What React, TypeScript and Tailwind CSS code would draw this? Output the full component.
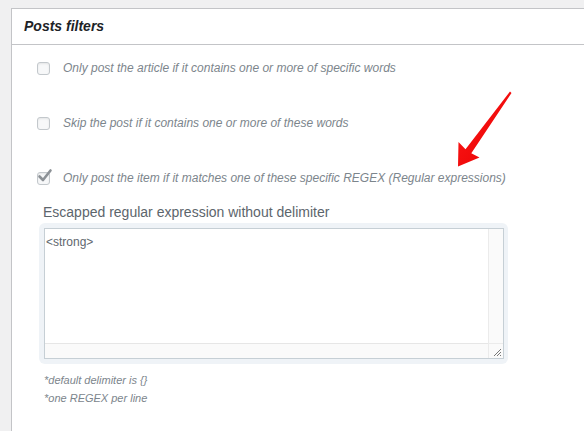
import React from 'react';

const font = { fontFamily: '"Liberation Sans", Arial, sans-serif' };

const Checkbox: React.FC<{ checked?: boolean }> = ({ checked }) => (
  <span className="relative inline-block w-[13px] h-[13px] shrink-0 rounded-[3px] border border-[#c3c8cc] bg-[#f7f8f9] shadow-[inset_0_1px_2px_rgba(0,0,0,0.08)]">
    {checked && (
      <svg className="absolute -left-[1px] -top-[5px]" width="16" height="16" viewBox="0 0 16 16">
        <path d="M2.5 8.5 L6 12 L13.5 2.5" fill="none" stroke="#8c9196" strokeWidth="2.6" strokeLinecap="round" strokeLinejoin="round" />
      </svg>
    )}
  </span>
);

const Row: React.FC<{ label: string; checked?: boolean }> = ({ label, checked }) => (
  <div className="flex items-center h-[24px] gap-[13px] mb-[31px]">
    <Checkbox checked={checked} />
    <span className="italic text-[12px] text-[#7c858c]">{label}</span>
  </div>
);

export default function App() {
  return (
    <div className="relative w-[584px] h-[431px] overflow-hidden bg-[#f0f0f1]" style={font}>
      <div className="ml-[11px] mt-[8px] h-[430px] bg-white border-l border-t border-[#c3c4c7]">
        <div className="h-[36px] border-b border-[#c3c4c7] flex items-center pl-[12px]">
          <span className="text-[14px] font-bold italic text-[#1d2327]">Posts filters</span>
        </div>
        <div className="pl-[25px] pt-[11px]">
          <Row label="Only post the article if it contains one or more of specific words" />
          <Row label="Skip the post if it contains one or more of these words" />
          <Row checked label="Only post the item if it matches one of these specific REGEX (Regular expressions)" />
          <div className="ml-[2px] mt-[-19px]">
            <div className="pl-[4px] text-[14px] leading-[20px] text-[#5c656c]">
              Escapped regular expression without delimiter
            </div>
            <div className="mt-[1px] w-[469px] h-[141px] rounded-[6px] bg-[#eff3f7] pt-[5px] pl-[5px]">
              <div className="w-[460px] h-[131px] border border-[#c6cfd5] bg-white flex flex-col">
                <div className="flex flex-1">
                  <div className="flex-1 text-[12px] text-[#5f676e] pt-[6px] pl-[1px] leading-[14px]">&lt;strong&gt;</div>
                  <div className="w-[15px] bg-[#fafafa] border-l border-[#ebebeb]" />
                </div>
                <div className="flex h-[15px]">
                  <div className="flex-1 bg-[#fafafa] border-t border-[#e6e6e6]" />
                  <div className="w-[15px] bg-[#fafafa] border-t border-l border-[#ebebeb] relative">
                    <svg className="absolute right-[1px] bottom-[1px]" width="9" height="9" viewBox="0 0 9 9">
                      <path d="M1 8 L8 1 M4 8 L8 4 M7 8 L8 7" stroke="#777" strokeWidth="1" />
                    </svg>
                  </div>
                </div>
              </div>
            </div>
            <div className="mt-[7px] pl-[5px] italic text-[11px] leading-[18px] text-[#7c858c]">
              <div>*default delimiter is {'{}'}</div>
              <div>*one REGEX per line</div>
            </div>
          </div>
        </div>
      </div>
      <svg className="absolute inset-0 pointer-events-none" width="584" height="431" viewBox="0 0 584 431">
        <defs>
          <linearGradient id="ar" x1="0" y1="0" x2="1" y2="1">
            <stop offset="0" stopColor="#ff1a1a" />
            <stop offset="1" stopColor="#e60000" />
          </linearGradient>
        </defs>
        <polygon
          points="510,91.5 511.5,93 471.3,153.3 479.5,157.5 458,166.5 458.5,142 465.5,149.3"
          fill="url(#ar)"
        />
      </svg>
    </div>
  );
}
